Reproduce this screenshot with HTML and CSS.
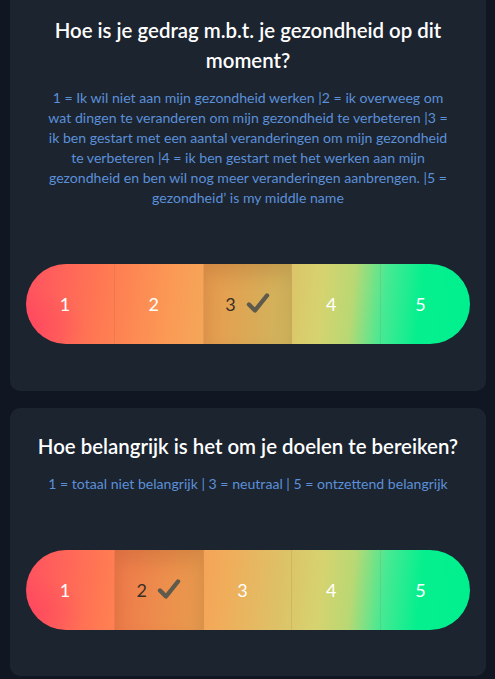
FILE: index.html
```html
<!DOCTYPE html>
<html lang="nl">
<head>
<meta charset="utf-8">
<title>Vragenlijst</title>
<link rel="stylesheet" href="styles.css">
</head>
<body>
<div class="page">
  <section class="card card-first">
    <h2 class="title">Hoe is je gedrag m.b.t. je gezondheid op dit moment?</h2>
    <p class="desc">1 = Ik wil niet aan mijn gezondheid werken |2 = ik overweeg om wat dingen te veranderen om mijn gezondheid te verbeteren |3 = ik ben gestart met een aantal veranderingen om mijn gezondheid te verbeteren |4 = ik ben gestart met het werken aan mijn gezondheid en ben wil nog meer veranderingen aanbrengen. |5 = gezondheid’ is my middle name</p>
    <div class="scale">
      <div class="seg">1</div>
      <div class="seg">2</div>
      <div class="seg seg-selected"><span>3</span><svg class="check" viewBox="0 0 24 22" width="24" height="22"><path d="M3 12.5 L9 18.5 L21 3.5" fill="none" stroke="currentColor" stroke-width="4.4" stroke-linecap="round" stroke-linejoin="round"/></svg></div>
      <div class="seg">4</div>
      <div class="seg">5</div>
    </div>
  </section>
  <section class="card">
    <h2 class="title">Hoe belangrijk is het om je doelen te bereiken?</h2>
    <p class="desc">1 = totaal niet belangrijk | 3 = neutraal | 5 = ontzettend belangrijk</p>
    <div class="scale">
      <div class="seg">1</div>
      <div class="seg seg-selected"><span>2</span><svg class="check" viewBox="0 0 24 22" width="24" height="22"><path d="M3 12.5 L9 18.5 L21 3.5" fill="none" stroke="currentColor" stroke-width="4.4" stroke-linecap="round" stroke-linejoin="round"/></svg></div>
      <div class="seg">3</div>
      <div class="seg">4</div>
      <div class="seg">5</div>
    </div>
  </section>
</div>
</body>
</html>
```

FILE: styles.css
```css
html, body {
  margin: 0;
  padding: 0;
  background: #111722;
  height: 100%;
  overflow: hidden;
}
body {
  font-family: Lato, "Noto Sans", sans-serif;
}
.page {
  padding: 0 9px 0 10px;
  display: flex;
  flex-direction: column;
  gap: 17px;
  margin-top: -8px;
}
.card {
  background: #1c2430;
  border-radius: 10px;
  padding: 23px 16px 46px;
  display: flex;
  flex-direction: column;
  align-items: stretch;
}
.card-first {
  padding-bottom: 47px;
}
.title {
  margin: 0;
  color: #ffffff;
  font-size: 20.4px;
  line-height: 30px;
  font-weight: 600;
  text-align: center;
  padding: 0 4px;
}
.desc {
  margin: 13px 0 0;
  padding: 0 17px;
  color: #5b90d8;
  font-size: 14.1px;
  line-height: 20px;
  text-align: center;
}
.scale {
  margin-top: 56px;
  height: 80px;
  border-radius: 40px;
  overflow: hidden;
  display: grid;
  grid-template-columns: repeat(5, 1fr);
  background:
    radial-gradient(ellipse 60px 40px at 0% 80%, rgba(255,60,95,0.55), rgba(255,60,95,0) 100%),
    linear-gradient(96deg, #ff5160 0%, #ff7a52 18%, #fb9a55 33%, #f0ad5a 45%, #ddc167 57%, #d6d36f 66%, #b8d874 73%, #48e993 80%, #06ef8e 88%, #00f08e 100%);
}
.seg {
  display: flex;
  align-items: center;
  justify-content: center;
  gap: 10px;
  color: #ffffff;
  font-size: 18px;
  border-right: 1px solid rgba(120, 70, 40, 0.12);
}
.seg:not(.seg-selected) {
  padding-right: 10px;
}
.seg:last-child {
  border-right: none;
}
.seg-selected {
  background: rgba(150, 90, 30, 0.14);
  box-shadow: inset 0 10px 18px rgba(120, 60, 20, 0.18);
  color: #3b3026;
}
.check {
  color: #5e5a4c;
  margin-top: -2px;
}
```
